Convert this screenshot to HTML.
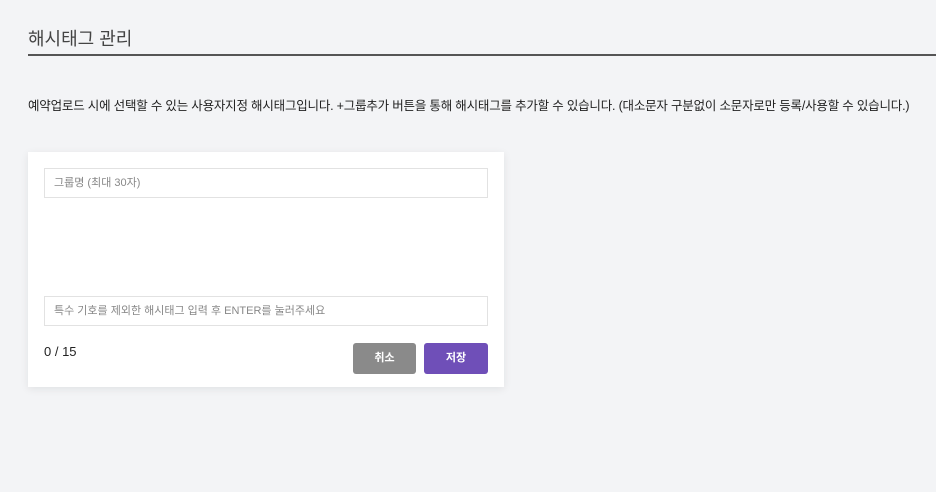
<!DOCTYPE html><html><head><meta charset="utf-8"><style>
body{margin:0;width:936px;height:492px;background:#f3f4f6;font-family:"Liberation Sans","Noto Sans CJK KR",sans-serif;position:relative;overflow:hidden}
.t{position:absolute;left:28px;top:25px;font-size:18px;color:#444}
.l{position:absolute;left:28px;right:0;top:54px;height:2px;background:#555}
.d{position:absolute;left:28px;top:95px;font-size:12.5px;color:#222;letter-spacing:-0.2px;white-space:nowrap}
.c{position:absolute;left:28px;top:152px;width:476px;height:235px;background:#fff;box-shadow:0 2px 8px rgba(0,0,0,.08)}
.i{position:absolute;left:16px;width:442px;height:28px;border:1px solid #e2e2e2;font-size:11px;color:#888;line-height:28px;padding-left:9px;box-sizing:content-box}
.n{position:absolute;left:16px;top:192px;font-size:13px;color:#222}
.b{position:absolute;top:191px;width:63px;height:31px;border-radius:3px;color:#fff;font-size:11px;font-weight:bold;text-align:center;line-height:31px}
</style></head><body>
<div class="t">해시태그 관리</div><div class="l"></div>
<div class="d">예약업로드 시에 선택할 수 있는 사용자지정 해시태그입니다. +그룹추가 버튼을 통해 해시태그를 추가할 수 있습니다. (대소문자 구분없이 소문자로만 등록/사용할 수 있습니다.)</div>
<div class="c">
<div class="i" style="top:16px;width:433px">그룹명 (최대 30자)</div>
<div class="i" style="top:144px;width:433px">특수 기호를 제외한 해시태그 입력 후 ENTER를 눌러주세요</div>
<div class="n">0 / 15</div>
<div class="b" style="left:325px;background:#8a8a8a">취소</div>
<div class="b" style="left:396px;width:64px;background:#6f4fb8">저장</div>
</div>
</body></html>
